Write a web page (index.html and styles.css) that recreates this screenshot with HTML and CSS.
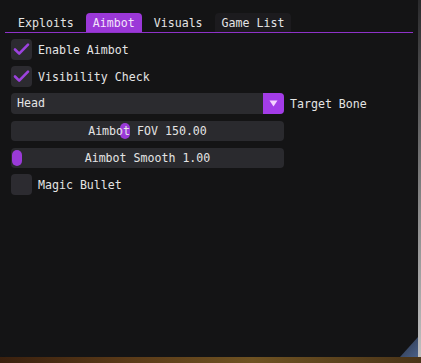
FILE: index.html
```html
<!DOCTYPE html>
<html>
<head>
<meta charset="utf-8">
<link rel="stylesheet" href="styles.css">
</head>
<body>
<div class="screen">
  <div class="window">
    <div class="tabbar">
      <div class="tab">Exploits</div>
      <div class="tab active">Aimbot</div>
      <div class="tab">Visuals</div>
      <div class="tab hover">Game List</div>
    </div>
    <div class="sep"></div>
    <div class="content">
      <div class="row">
        <div class="check on">
          <svg width="21" height="21" viewBox="0 0 21 21"><path d="M4 10.5 L8.2 14.6 L17 5.6" fill="none" stroke="#9c42de" stroke-width="2.6" stroke-linecap="round" stroke-linejoin="round"/></svg>
        </div>
        <span class="label">Enable Aimbot</span>
      </div>
      <div class="row">
        <div class="check on">
          <svg width="21" height="21" viewBox="0 0 21 21"><path d="M4 10.5 L8.2 14.6 L17 5.6" fill="none" stroke="#9c42de" stroke-width="2.6" stroke-linecap="round" stroke-linejoin="round"/></svg>
        </div>
        <span class="label">Visibility Check</span>
      </div>
      <div class="row">
        <div class="combo">
          <span class="combo-text">Head</span>
          <div class="combo-btn">
            <svg width="21" height="21" viewBox="0 0 21 21"><path d="M6.5 7.5 L14.5 7.5 L10.5 13.5 Z" fill="#f4d2ff"/></svg>
          </div>
        </div>
        <span class="label side">Target Bone</span>
      </div>
      <div class="row">
        <div class="slider">
          <div class="grab" style="left:109px"></div>
          <span class="slider-text">Aimbot FOV 150.00</span>
        </div>
      </div>
      <div class="row">
        <div class="slider">
          <div class="grab" style="left:1px"></div>
          <span class="slider-text">Aimbot Smooth 1.00</span>
        </div>
      </div>
      <div class="row">
        <div class="check"></div>
        <span class="label">Magic Bullet</span>
      </div>
    </div>
    <div class="grip">
      <svg width="18" height="20" viewBox="0 0 18 20"><defs><linearGradient id="g" x1="0" y1="0" x2="1" y2="1"><stop offset="0" stop-color="#2a3346"/><stop offset="1" stop-color="#4a6088"/></linearGradient></defs><path d="M18 0 L18 20 L0 20 Z" fill="url(#g)"/></svg>
    </div>
  </div>
  <div class="edge"></div>
</div>
<div class="desk"></div>
</body>
</html>
```
FILE: styles.css
```css
* { box-sizing: border-box; }
html, body { margin: 0; padding: 0; }
body {
  width: 421px;
  height: 363px;
  overflow: hidden;
  background: #141415;
  font-family: "DejaVu Sans Mono", "Liberation Mono", monospace;
  font-size: 11.6px;
  color: #e4e4e4;
}
.screen {
  display: flex;
  height: 357px;
}
.window {
  position: relative;
  width: 418px;
  height: 357px;
  background: #141415;
  border-radius: 0 0 5px 5px;
  padding-top: 13px;
}
.edge {
  width: 3px;
  background: linear-gradient(#2a2a2c, #8a8a8a 60%, #c0c0c0);
}
.desk {
  height: 6px;
  background: linear-gradient(90deg, #3a200e, #5a3a18 30%, #6e5222 60%, #4a3418);
}
.tabbar {
  display: flex;
  gap: 5px;
  padding-left: 11px;
  height: 19px;
}
.tab {
  padding: 0 7px;
  height: 19px;
  line-height: 20px;
  border-radius: 4px 4px 0 0;
  white-space: pre;
}
.tab.active {
  background: #9b38d8;
  color: #f3e4fb;
}
.tab.hover {
  background: #1c1b1e;
}
.sep {
  margin: 0 5px;
  height: 1px;
  background: #8e32c8;
}
.content {
  display: flex;
  flex-direction: column;
  gap: 6px;
  padding: 6px 11px 0 11px;
}
.row {
  display: flex;
  align-items: center;
  height: 21px;
}
.check {
  width: 21px;
  height: 21px;
  border-radius: 4px;
  background: #2c2b30;
  margin-right: 6px;
}
.check svg { display: block; }
.label { white-space: pre; }
.label.side { margin-left: 6px; }
.combo {
  width: 273px;
  height: 21px;
  display: flex;
  background: #2b2b2f;
  border-radius: 4px;
}
.combo-text {
  flex: 1;
  line-height: 21px;
  padding-left: 6px;
}
.combo-btn {
  width: 21px;
  height: 21px;
  background: #a33ce8;
  border-radius: 0 4px 4px 0;
}
.combo-btn svg { display: block; }
.slider {
  position: relative;
  width: 273px;
  height: 20px;
  background: #2a2a2e;
  border-radius: 4px;
  display: flex;
  align-items: center;
  justify-content: center;
}
.grab {
  position: absolute;
  top: 2px;
  width: 10px;
  height: 16px;
  border-radius: 5px;
  background: #9a3ad8;
}
.slider-text {
  position: relative;
  white-space: pre;
}
.grip {
  position: absolute;
  right: 0;
  bottom: 0;
  width: 18px;
  height: 20px;
}
.grip svg { display: block; }
```
